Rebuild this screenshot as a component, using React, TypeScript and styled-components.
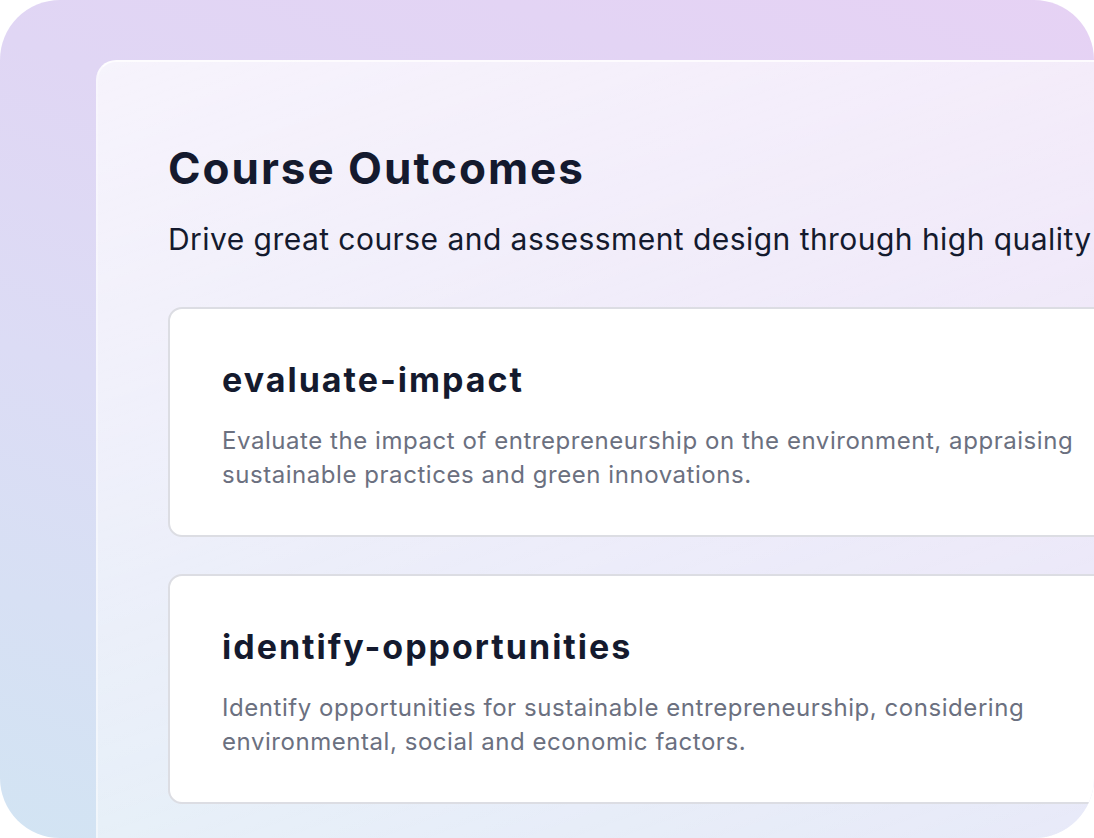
import React from "react";
import styled, { createGlobalStyle } from "styled-components";

const GlobalStyle = createGlobalStyle`
    * {
        box-sizing: border-box;
    }
    body {
        margin: 0;
        background: #ffffff;
        font-family: Inter, "Noto Sans", sans-serif;
    }
`;

const outcomes = [
    {
        slug: "evaluate-impact",
        text: "Evaluate the impact of entrepreneurship on the environment, appraising sustainable practices and green innovations.",
    },
    {
        slug: "identify-opportunities",
        text: "Identify opportunities for sustainable entrepreneurship, considering environmental, social and economic factors.",
    },
];

export default function App() {
    return (
        <>
            <GlobalStyle />
            <Frame>
                <Panel>
                    <Heading>Course Outcomes</Heading>
                    <Lead>
                        Drive great course and assessment design through high
                        quality outcomes.
                    </Lead>
                    <OutcomeList>
                        {outcomes.map((o) => (
                            <OutcomeCard key={o.slug}>
                                <h3>{o.slug}</h3>
                                <p>{o.text}</p>
                            </OutcomeCard>
                        ))}
                    </OutcomeList>
                </Panel>
            </Frame>
        </>
    );
}

const Frame = styled.main`
    width: 1094px;
    height: 838px;
    border-radius: 60px;
    overflow: hidden;
    padding: 60px 0 0 96px;
    background: linear-gradient(
        200deg,
        #e6d2f4 0%,
        #e0d6f4 35%,
        #dcdcf5 60%,
        #d2e4f3 100%
    );
`;

const Panel = styled.section`
    width: 1040px;
    height: 860px;
    border-top-left-radius: 20px;
    border-top: 2px solid rgba(255, 255, 255, 0.85);
    border-left: 2px solid rgba(255, 255, 255, 0.5);
    padding: 79px 0 0 70px;
    background: linear-gradient(
        160deg,
        rgba(255, 255, 255, 0.72) 0%,
        rgba(255, 255, 255, 0.5) 45%,
        rgba(255, 255, 255, 0.35) 100%
    );
    color: #141a2e;
    white-space: nowrap;
`;

const Heading = styled.h1`
    margin: 0;
    font-size: 44px;
    font-weight: 700;
    letter-spacing: 2px;
    line-height: normal;
`;

const Lead = styled.p`
    margin: 26px 0 0;
    font-size: 30px;
    font-weight: 400;
    letter-spacing: 0.45px;
    line-height: normal;
`;

const OutcomeList = styled.div`
    display: flex;
    flex-direction: column;
    gap: 37px;
    margin-top: 50px;
`;

const OutcomeCard = styled.article`
    background: #ffffff;
    border: 2px solid #dcdde3;
    border-radius: 14px;
    padding: 50px 0 43px 52px;
    white-space: normal;

    h3 {
        margin: 0;
        font-size: 34px;
        font-weight: 700;
        letter-spacing: 2px;
        line-height: normal;
        color: #141a2e;
    }

    p {
        margin: 24px 0 0;
        max-width: 880px;
        font-size: 24px;
        letter-spacing: 0.55px;
        line-height: 34px;
        color: #6b7080;
    }
`;
